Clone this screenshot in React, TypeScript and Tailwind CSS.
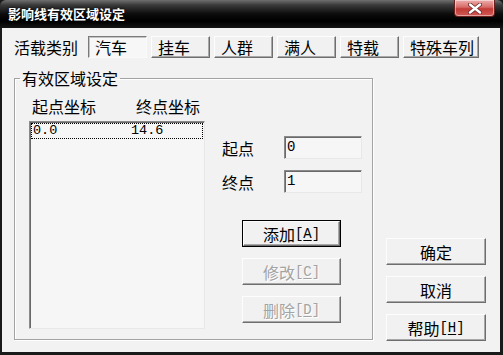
import React from "react";

const cjk = "font-['Noto_Sans_CJK_SC',sans-serif]";
const mono = "font-['Liberation_Mono',monospace]";

const raised =
  "border border-t-[#fdfdfd] border-l-[#fdfdfd] border-r-[#6e6e6e] border-b-[#6e6e6e] shadow-[inset_-1px_-1px_0_#a8a8a8] bg-[#f1f1f1]";
const sunken =
  "border border-t-[#8a8a8a] border-l-[#8a8a8a] border-r-[#e8e8e8] border-b-[#e8e8e8] shadow-[inset_1px_1px_0_#6a6a6a] bg-[#f6f6f6]";

const tabs = [
  { label: "汽车", w: "w-[59px]", pressed: true },
  { label: "挂车", w: "w-[59px]" },
  { label: "人群", w: "w-[59px]" },
  { label: "满人", w: "w-[59px]" },
  { label: "特载", w: "w-[59px]" },
  { label: "特殊车列", w: "w-[76px]" },
];

function Key({ k }: { k: string }) {
  return (
    <span className={mono + " text-[14px]"}>
      [<span className="underline underline-offset-2">{k}</span>]
    </span>
  );
}

function ActionBtn({
  text,
  k,
  disabled,
  isDefault,
  w,
}: {
  text: string;
  k?: string;
  disabled?: boolean;
  isDefault?: boolean;
  w: string;
}) {
  const body = (
    <div
      className={`${raised} flex h-full w-full items-center justify-center text-[16px] leading-none ${
        disabled ? "text-[#a3a3a3] [text-shadow:1px_1px_0_#fff]" : "text-black"
      }`}
    >
      <span>{text}</span>
      {k && <Key k={k} />}
    </div>
  );
  if (isDefault)
    return <div className={`${w} h-[27px] border border-black`}>{body}</div>;
  return <div className={`${w} h-[27px]`}>{body}</div>;
}

export default function App() {
  return (
    <div className={`${cjk} flex h-[355px] w-[503px] flex-col bg-[#1a1a1a] text-black`}>
      {/* title bar */}
      <div className="flex h-[28px] items-start justify-between rounded-t-[6px] bg-[linear-gradient(to_bottom,#707070_0%,#3a3a3a_18%,#0c0c0c_50%,#000_75%,#151515_100%)]">
        <div className="pl-[8px] pt-[6px] text-[13px] font-bold leading-[16px] text-white [text-shadow:0_0_3px_#000]">
          影响线有效区域设定
        </div>
        <div className="mr-[8px] flex h-[17px] w-[41px] items-center justify-center rounded-b-[4px] border border-t-0 border-[#6b2020] bg-[linear-gradient(to_bottom,#eeb0ae_0%,#d66a66_45%,#c23a36_55%,#d25a55_100%)] shadow-[inset_0_0_0_1px_rgba(255,255,255,0.45)]">
          <svg width="14" height="11" viewBox="0 0 14 11">
            <path d="M2 1.5 L12 9.5 M12 1.5 L2 9.5" stroke="#6a2a2a" strokeWidth="4" strokeLinecap="round" />
            <path d="M2 1.5 L12 9.5 M12 1.5 L2 9.5" stroke="#fff" strokeWidth="2.4" strokeLinecap="round" />
          </svg>
        </div>
      </div>

      {/* body */}
      <div className="flex-1 border-b-[3px] border-l-[2px] border-r-[3px] border-[#1a1a1a] bg-[#f2f2f2] pl-[12px]">
        {/* load category row */}
        <div className="mt-[8px] flex h-[22px] items-center">
          <div className="w-[74px] text-[16px] leading-none">活载类别</div>
          <div className="flex gap-[4px]">
            {tabs.map((t) => (
              <div
                key={t.label}
                className={`${t.w} flex h-[22px] items-center pl-[6px] text-[16px] leading-none ${
                  t.pressed
                    ? "border border-t-[#7a7a7a] border-l-[#7a7a7a] border-r-[#fafafa] border-b-[#fafafa] bg-[#f7f7f7] shadow-[inset_1px_1px_0_#c4c4c4]"
                    : raised
                }`}
              >
                {t.label}
              </div>
            ))}
          </div>
        </div>

        <div className="flex items-end">
          <fieldset className="mt-[10px] w-[359px] border border-[#a3a3a3] shadow-[inset_1px_1px_0_#fff,1px_1px_0_#fff]">
            <legend className="ml-[5px] px-[2px] text-[16px] leading-[20px]">有效区域设定</legend>
            <div className="flex pb-[10px] pl-[14px] pt-[10px]">
              {/* list */}
              <div className="flex flex-col">
                <div className="flex h-[16px] pl-[3px] text-[16px] leading-[16px]">
                  <span className="w-[104px]">起点坐标</span>
                  <span>终点坐标</span>
                </div>
                <div className={`${sunken} mt-[7px] h-[208px] w-[176px] p-[1px]`}>
                  <div className={`${mono} flex h-[16px] items-center border border-dotted border-black pl-[1px] text-[13.5px] leading-none`}>
                    <span className="w-[98px]">0.0</span>
                    <span>14.6</span>
                  </div>
                </div>
              </div>

              {/* editor */}
              <div className="ml-[17px] flex flex-col pt-[38px]">
                <div className="flex items-center">
                  <span className="w-[62px] text-[16px] leading-none">起点</span>
                  <div className={`${sunken} ${mono} flex h-[23px] w-[78px] items-center pl-[2px] text-[14px]`}>0</div>
                </div>
                <div className="mt-[11px] flex items-center">
                  <span className="w-[62px] text-[16px] leading-none">终点</span>
                  <div className={`${sunken} ${mono} flex h-[23px] w-[78px] items-center pl-[2px] text-[14px]`}>1</div>
                </div>
                <div className="ml-[20px] mt-[27px] flex flex-col gap-[11px]">
                  <ActionBtn text="添加" k="A" w="w-[99px]" isDefault />
                  <ActionBtn text="修改" k="C" w="w-[99px]" disabled />
                  <ActionBtn text="删除" k="D" w="w-[99px]" disabled />
                </div>
              </div>
            </div>
          </fieldset>

          <div className="mb-[-1px] ml-[13px] flex flex-col gap-[11px]">
            <ActionBtn text="确定" w="w-[100px]" />
            <ActionBtn text="取消" w="w-[100px]" />
            <ActionBtn text="帮助" k="H" w="w-[100px]" />
          </div>
        </div>
      </div>
    </div>
  );
}
